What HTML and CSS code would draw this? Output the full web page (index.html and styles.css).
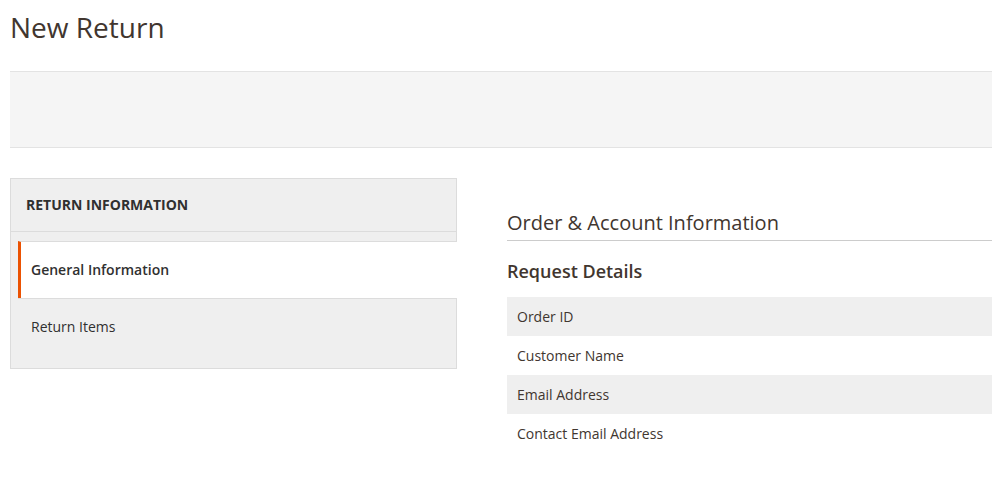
FILE: index.html
```html
<!DOCTYPE html>
<html lang="en">
<head>
<meta charset="utf-8">
<title>New Return</title>
<link rel="stylesheet" href="styles.css">
</head>
<body>
<div class="page">
  <header class="page-header">
    <h1 class="page-title">New Return</h1>
  </header>
  <div class="actions-bar"></div>
  <div class="main">
    <aside class="tabs">
      <div class="tabs-title">Return Information</div>
      <ul class="tabs-items">
        <li class="tab-item active">General Information</li>
        <li class="tab-item">Return Items</li>
      </ul>
    </aside>
    <section class="content">
      <h2 class="section-title">Order &amp; Account Information</h2>
      <h3 class="sub-title">Request Details</h3>
      <div class="details">
        <div class="row">Order ID</div>
        <div class="row">Customer Name</div>
        <div class="row">Email Address</div>
        <div class="row">Contact Email Address</div>
      </div>
    </section>
  </div>
</div>
</body>
</html>
```

FILE: styles.css
```css
html, body {
  margin: 0;
  padding: 0;
  background: #fff;
  overflow: hidden;
}
body {
  font-family: "Open Sans", "Liberation Sans", sans-serif;
  color: #41362f;
  font-size: 14px;
}
.page {
  padding-left: 10px;
}
.page-header {
  height: 71px;
  box-sizing: border-box;
  padding-top: 9px;
}
.page-title {
  margin: 0;
  font-size: 28px;
  font-weight: 400;
  line-height: 36px;
  color: #41362f;
}
.actions-bar {
  height: 75px;
  background: #f5f5f5;
  border-top: 1px solid #e3e3e3;
  border-bottom: 1px solid #e3e3e3;
}
.main {
  display: flex;
  gap: 50px;
  margin-top: 30px;
  align-items: flex-start;
}
.tabs {
  width: 447px;
  box-sizing: border-box;
  flex: none;
  background: #efefef;
  border: 1px solid #dcdcdc;
}
.tabs-title {
  height: 53px;
  box-sizing: border-box;
  padding: 0 15px 2px;
  display: flex;
  align-items: center;
  font-size: 14px;
  font-weight: 700;
  text-transform: uppercase;
  color: #303030;
  border-bottom: 1px solid #dcdcdc;
}
.tabs-items {
  list-style: none;
  margin: 0;
  padding: 9px 0 13px 7px;
}
.tab-item {
  height: 57px;
  box-sizing: border-box;
  display: flex;
  align-items: center;
  padding-left: 13px;
  padding-bottom: 2px;
  border-top: 1px solid #dcdcdc;
  color: #303030;
  margin-right: -1px;
}
.tab-item.active {
  background: #fff;
  font-weight: 600;
  padding-left: 10px;
  border-left: 3px solid #eb5202;
}
.tab-item.active + .tab-item {
  margin-right: 0;
}
.content {
  flex: 1;
  min-width: 0;
  padding-top: 31px;
}
.section-title {
  margin: 0;
  font-size: 20px;
  font-weight: 400;
  line-height: 28px;
  padding-bottom: 3px;
  border-bottom: 1px solid #cccccc;
  color: #41362f;
}
.sub-title {
  margin: 0;
  padding-top: 18px;
  font-size: 18px;
  font-weight: 600;
  line-height: 24px;
  padding-bottom: 14px;
  color: #41362f;
}
.row {
  height: 39px;
  box-sizing: border-box;
  display: flex;
  align-items: center;
  padding-left: 10px;
  color: #41362f;
}
.row:nth-child(odd) {
  background: #efefef;
}
```
